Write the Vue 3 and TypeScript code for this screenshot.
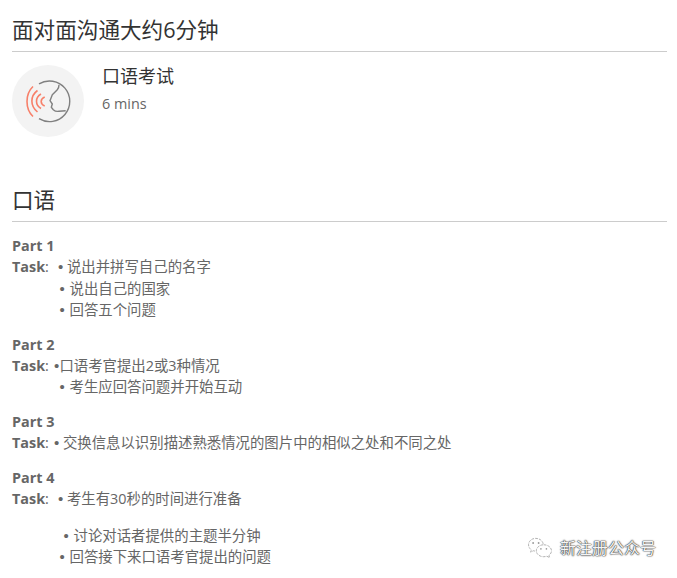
<script setup lang="ts">
interface Line { text: string; indent: string; tight?: boolean }
interface Part { title: string; blocks: Line[][] }

const parts: Part[] = [
  {
    title: 'Part 1',
    blocks: [[
      { text: '说出并拼写自己的名字', indent: 'first-wide' },
      { text: '说出自己的国家', indent: 'hang' },
      { text: '回答五个问题', indent: 'hang' },
    ]],
  },
  {
    title: 'Part 2',
    blocks: [[
      { text: '口语考官提出2或3种情况', indent: 'first-narrow', tight: true },
      { text: '考生应回答问题并开始互动', indent: 'hang' },
    ]],
  },
  {
    title: 'Part 3',
    blocks: [[
      { text: '交换信息以识别描述熟悉情况的图片中的相似之处和不同之处', indent: 'first-narrow' },
    ]],
  },
  {
    title: 'Part 4',
    blocks: [
      [{ text: '考生有30秒的时间进行准备', indent: 'first-wide' }],
      [
        { text: '讨论对话者提供的主题半分钟', indent: 'hang-far' },
        { text: '回答接下来口语考官提出的问题', indent: 'hang' },
      ],
    ],
  },
]
</script>

<template>
  <main class="page">
    <h2 class="heading">面对面沟通大约6分钟</h2>

    <section class="exam">
      <div class="badge">
        <svg class="badge-icon" viewBox="0 0 48 48" width="48" height="48" fill="none" aria-hidden="true">
          <path d="M15 6.900 A20.300 20.300 0 1 1 15 41.700" stroke="#808080" stroke-width="1.400" />
          <path d="M35 7.700 C35 10 34.500 11.500 33.300 12.700 L28.300 17.700 L26 23.700 L28.300 27 L27.300 30.300 L29.300 32.700 C31 34.300 33 34.600 35 34.300 L41.700 33.800" stroke="#808080" stroke-width="1.400" stroke-linejoin="round" />
          <path d="M9 9.500 C1 17 1 32 9 39.500" stroke="#f7806a" stroke-width="1.600" />
          <path d="M13.500 13.500 C6 19 6 29 13.500 35" stroke="#f7806a" stroke-width="1.600" />
          <path d="M17 17 C11 20.500 11 28 17 31.500" stroke="#f7806a" stroke-width="1.600" />
          <path d="M20.700 20 C16 22 16 27 20.700 29" stroke="#f7806a" stroke-width="1.600" />
        </svg>
      </div>
      <div class="exam-info">
        <div class="exam-title">口语考试</div>
        <div class="exam-time">6 mins</div>
      </div>
    </section>

    <h2 class="heading heading-second">口语</h2>

    <section class="parts">
      <article v-for="part in parts" :key="part.title" class="part">
        <strong class="part-title">{{ part.title }}</strong>
        <div v-for="(block, b) in part.blocks" :key="b" class="block">
          <div v-for="(line, l) in block" :key="l" class="line" :class="line.indent">
            <strong v-if="b === 0 && l === 0" class="task">Task</strong><span v-if="b === 0 && l === 0">:</span>
            <span class="bullet" :class="{ tight: line.tight }">•</span><span>{{ line.text }}</span>
          </div>
        </div>
      </article>
    </section>

    <div class="watermark">
      <svg class="wechat" viewBox="0 0 28 24" width="26" height="22" fill="none" aria-hidden="true">
        <path d="M17.500 7.500 C16.500 3.500 13 1.500 9.500 1.500 C5 1.500 1.500 4.500 1.500 8.500 C1.500 10.800 2.700 12.700 4.600 14 L3.800 16.500 L6.800 15 C7.800 15.300 8.800 15.500 10 15.500" stroke="#aaa" stroke-width="1" stroke-dasharray="3 1.200" />
        <path d="M18 8.500 C22.800 8.500 26.500 11.500 26.500 15 C26.500 17 25.500 18.700 23.800 20 L24.500 22.500 L21.500 21 C20.500 21.300 19.300 21.500 18 21.500 C13.500 21.500 10 18.600 10 15 C10 11.500 13.500 8.500 18 8.500 Z" stroke="#aaa" stroke-width="1" stroke-dasharray="3 1.200" />
        <circle cx="6.500" cy="6.500" r="1" fill="#999" />
        <circle cx="12.500" cy="6.500" r="1" fill="#999" />
        <circle cx="15" cy="13" r=".9" fill="#999" />
        <circle cx="21" cy="13" r=".9" fill="#999" />
      </svg>
      <span class="watermark-text">新注册公众号</span>
    </div>
  </main>
</template>

<style>
html, body {
  margin: 0;
  background: #fff;
}
</style>

<style scoped>
.page {
  position: relative;
  box-sizing: border-box;
  width: 677px;
  height: 578px;
  padding: 14px 10px 0 12px;
  overflow: hidden;
  font-family: "Open Sans", "Noto Sans CJK SC", sans-serif;
  font-size: 14.4px;
  line-height: 21.3px;
  color: #666;
}

.heading {
  margin: 0;
  padding-bottom: 5px;
  height: 32px;
  line-height: 32px;
  font-size: 21.6px;
  font-weight: 400;
  color: #333;
  border-bottom: 1px solid #ccc;
}

.heading-second {
  margin-top: 47px;
}

.exam {
  display: flex;
  gap: 18px;
  margin-top: 13px;
}

.badge {
  display: flex;
  align-items: center;
  justify-content: center;
  width: 72px;
  height: 72px;
  border-radius: 50%;
  background: #f3f3f3;
}

.exam-info {
  margin-top: -1px;
}

.exam-title {
  font-size: 18px;
  line-height: 24px;
  color: #333;
}

.exam-time {
  margin-top: 4px;
  line-height: 24px;
  color: #666;
}

.parts {
  margin-top: 13px;
}

.part {
  margin-bottom: 13.400px;
}

.part-title {
  display: block;
  font-weight: 700;
}

.block + .block {
  margin-top: 15.500px;
}

.task {
  font-weight: 700;
}

.line {
  white-space: nowrap;
}

.bullet {
  display: inline-block;
  width: 10px;
  font-family: "Liberation Sans", sans-serif;
  font-size: 15px;
}

.first-wide .bullet,
.first-narrow .bullet {
  width: 9px;
}

.first-wide .bullet {
  margin-left: 9px;
}

.first-narrow .bullet {
  margin-left: 5px;
}

.first-narrow .bullet.tight {
  width: 5.500px;
}

.hang {
  padding-left: 47.500px;
}

.hang-far {
  padding-left: 51.500px;
}

.watermark {
  position: absolute;
  left: 527px;
  top: 536px;
  display: flex;
  align-items: center;
  gap: 7px;
}

.watermark-text {
  font-size: 16px;
  line-height: 24px;
  color: #f4f4f4;
  text-shadow: 0 0 1px #333, 0 0 1px #333, 0 0 2px #666;
}
</style>
